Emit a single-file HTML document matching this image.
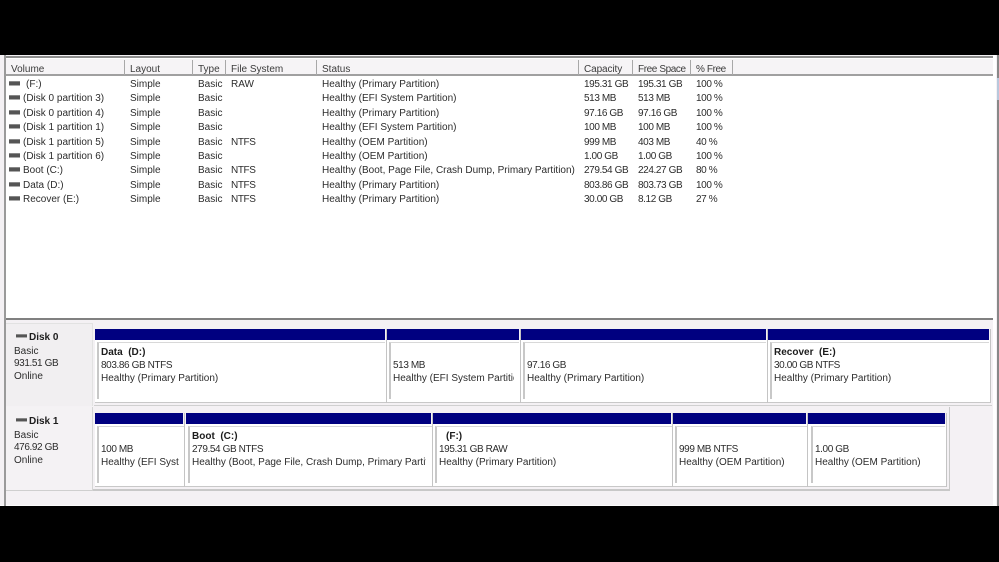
<!DOCTYPE html>
<html><head><meta charset="utf-8">
<style>
html,body{margin:0;padding:0;background:#000;width:999px;height:562px;overflow:hidden}
#s{position:absolute;left:0;top:0;width:999px;height:562px;background:#000;overflow:hidden;font:10px/14px "Liberation Sans",sans-serif;color:#2c2c2c;filter:blur(.3px)}
#s div{position:absolute}
.t{white-space:nowrap;transform:translateY(1px)}
.n{letter-spacing:-.4px}
.h{top:62px;color:#3c3c3c}
.sep{top:60px;width:1px;height:15px;background:#a8a8a8}
.ic{width:11px;height:3px;background:#555;border-top:1px solid #888;border-bottom:1px solid #aaa;box-sizing:content-box;left:9px}
.bar{background:#000080;height:11px}
.p{border-left:2px solid #c8c8c8;border-top:1px solid #d8d8d8;box-sizing:border-box;overflow:hidden;height:57px}
.p span{position:absolute;white-space:nowrap;transform:translateY(1px)}
.v{width:1px;background:#c4c4c4}
b{color:#1c1c1c}
</style></head><body><div id="s">
<div style="left:0;top:55px;width:999px;height:451px;background:#f4f1f4"></div>
<div style="left:0;top:505px;width:999px;height:1px;background:#fbfbfb"></div>
<div style="left:4px;top:55px;width:2px;height:451px;background:#9a9a9a"></div>
<div style="left:6px;top:58px;width:987px;height:260px;background:#fff"></div>
<div style="left:6px;top:56px;width:987px;height:2px;background:#8c8c8c"></div>
<div style="left:6px;top:59px;width:987px;height:16px;background:#f6f4f6"></div>
<div style="left:6px;top:74px;width:987px;height:2px;background:#a0a0a0"></div>
<div style="left:993px;top:55px;width:3px;height:451px;background:#fff"></div>
<div style="left:997px;top:55px;width:2px;height:451px;background:#888"></div>
<div style="left:997px;top:78px;width:2px;height:22px;background:#b8c8dc"></div>
<div style="left:6px;top:318px;width:987px;height:2px;background:#808080"></div>

<div class="sep" style="left:124px"></div><div class="sep" style="left:192px"></div><div class="sep" style="left:225px"></div><div class="sep" style="left:316px"></div><div class="sep" style="left:578px"></div><div class="sep" style="left:632px"></div><div class="sep" style="left:690px"></div><div class="sep" style="left:732px"></div>
<div class="t h" style="left:11px">Volume</div><div class="t h" style="left:130px">Layout</div><div class="t h" style="left:198px">Type</div><div class="t h" style="left:231px">File System</div><div class="t h" style="left:322px">Status</div><div class="t h" style="left:584px;letter-spacing:-.1px">Capacity</div><div class="t h n" style="left:638px">Free Space</div><div class="t h n" style="left:696px">% Free</div>

<div class="ic" style="top:81px"></div><div class="t" style="left:26px;top:77px">(F:)</div><div class="t" style="left:130px;top:77px">Simple</div><div class="t" style="left:198px;top:77px">Basic</div><div class="t" style="left:231px;top:77px">RAW</div><div class="t" style="left:322px;top:77px">Healthy (Primary Partition)</div><div class="t n" style="left:584px;top:77px">195.31 GB</div><div class="t n" style="left:638px;top:77px">195.31 GB</div><div class="t n" style="left:696px;top:77px">100 %</div>
<div class="ic" style="top:95px"></div><div class="t" style="left:23px;top:91px">(Disk 0 partition 3)</div><div class="t" style="left:130px;top:91px">Simple</div><div class="t" style="left:198px;top:91px">Basic</div><div class="t" style="left:322px;top:91px">Healthy (EFI System Partition)</div><div class="t n" style="left:584px;top:91px">513 MB</div><div class="t n" style="left:638px;top:91px">513 MB</div><div class="t n" style="left:696px;top:91px">100 %</div>
<div class="ic" style="top:110px"></div><div class="t" style="left:23px;top:106px">(Disk 0 partition 4)</div><div class="t" style="left:130px;top:106px">Simple</div><div class="t" style="left:198px;top:106px">Basic</div><div class="t" style="left:322px;top:106px">Healthy (Primary Partition)</div><div class="t n" style="left:584px;top:106px">97.16 GB</div><div class="t n" style="left:638px;top:106px">97.16 GB</div><div class="t n" style="left:696px;top:106px">100 %</div>
<div class="ic" style="top:124px"></div><div class="t" style="left:23px;top:120px">(Disk 1 partition 1)</div><div class="t" style="left:130px;top:120px">Simple</div><div class="t" style="left:198px;top:120px">Basic</div><div class="t" style="left:322px;top:120px">Healthy (EFI System Partition)</div><div class="t n" style="left:584px;top:120px">100 MB</div><div class="t n" style="left:638px;top:120px">100 MB</div><div class="t n" style="left:696px;top:120px">100 %</div>
<div class="ic" style="top:139px"></div><div class="t" style="left:23px;top:135px">(Disk 1 partition 5)</div><div class="t" style="left:130px;top:135px">Simple</div><div class="t" style="left:198px;top:135px">Basic</div><div class="t n" style="left:231px;top:135px">NTFS</div><div class="t" style="left:322px;top:135px">Healthy (OEM Partition)</div><div class="t n" style="left:584px;top:135px">999 MB</div><div class="t n" style="left:638px;top:135px">403 MB</div><div class="t n" style="left:696px;top:135px">40 %</div>
<div class="ic" style="top:153px"></div><div class="t" style="left:23px;top:149px">(Disk 1 partition 6)</div><div class="t" style="left:130px;top:149px">Simple</div><div class="t" style="left:198px;top:149px">Basic</div><div class="t" style="left:322px;top:149px">Healthy (OEM Partition)</div><div class="t n" style="left:584px;top:149px">1.00 GB</div><div class="t n" style="left:638px;top:149px">1.00 GB</div><div class="t n" style="left:696px;top:149px">100 %</div>
<div class="ic" style="top:167px"></div><div class="t" style="left:23px;top:163px">Boot (C:)</div><div class="t" style="left:130px;top:163px">Simple</div><div class="t" style="left:198px;top:163px">Basic</div><div class="t n" style="left:231px;top:163px">NTFS</div><div class="t" style="left:322px;top:163px">Healthy (Boot, Page File, Crash Dump, Primary Partition)</div><div class="t n" style="left:584px;top:163px">279.54 GB</div><div class="t n" style="left:638px;top:163px">224.27 GB</div><div class="t n" style="left:696px;top:163px">80 %</div>
<div class="ic" style="top:182px"></div><div class="t" style="left:23px;top:178px">Data (D:)</div><div class="t" style="left:130px;top:178px">Simple</div><div class="t" style="left:198px;top:178px">Basic</div><div class="t n" style="left:231px;top:178px">NTFS</div><div class="t" style="left:322px;top:178px">Healthy (Primary Partition)</div><div class="t n" style="left:584px;top:178px">803.86 GB</div><div class="t n" style="left:638px;top:178px">803.73 GB</div><div class="t n" style="left:696px;top:178px">100 %</div>
<div class="ic" style="top:196px"></div><div class="t" style="left:23px;top:192px">Recover (E:)</div><div class="t" style="left:130px;top:192px">Simple</div><div class="t" style="left:198px;top:192px">Basic</div><div class="t n" style="left:231px;top:192px">NTFS</div><div class="t" style="left:322px;top:192px">Healthy (Primary Partition)</div><div class="t n" style="left:584px;top:192px">30.00 GB</div><div class="t n" style="left:638px;top:192px">8.12 GB</div><div class="t n" style="left:696px;top:192px">27 %</div>

<div style="left:6px;top:323px;width:87px;height:83px;background:#f1eff1;border-top:1px solid #e2e2e2;border-right:1px solid #e2e2e2;box-sizing:border-box"></div>
<div style="left:6px;top:407px;width:87px;height:84px;background:#f4f2f4;border-right:1px solid #d4d4d4;border-bottom:1px solid #cfcfcf;box-sizing:border-box"></div>
<div style="left:94px;top:405px;width:898px;height:1px;background:#d0d0d0"></div>
<div style="left:93px;top:489px;width:857px;height:2px;background:#c8c8c8"></div>
<div style="left:949px;top:407px;width:1px;height:83px;background:#c8c8c8"></div>

<div style="left:95px;top:340px;width:895px;height:62px;background:#fff"></div>
<div style="left:95px;top:402px;width:896px;height:1px;background:#c8c8c8"></div>
<div style="left:95px;top:424px;width:851px;height:62px;background:#fff"></div>
<div style="left:95px;top:486px;width:852px;height:1px;background:#c8c8c8"></div>

<div class="v" style="left:386px;top:329px;height:74px"></div><div class="v" style="left:520px;top:329px;height:74px"></div><div class="v" style="left:767px;top:329px;height:74px"></div><div class="v" style="left:990px;top:329px;height:74px"></div>
<div class="v" style="left:184px;top:413px;height:74px"></div><div class="v" style="left:432px;top:413px;height:74px"></div><div class="v" style="left:672px;top:413px;height:74px"></div><div class="v" style="left:807px;top:413px;height:74px"></div><div class="v" style="left:946px;top:413px;height:74px"></div>

<div class="ic" style="left:16px;top:334px;height:2px"></div>
<div class="t" style="left:29px;top:330px"><b>Disk 0</b></div><div class="t" style="left:14px;top:344px">Basic</div><div class="t n" style="left:14px;top:356px">931.51 GB</div><div class="t" style="left:14px;top:369px">Online</div>
<div class="ic" style="left:16px;top:418px;height:2px"></div>
<div class="t" style="left:29px;top:414px"><b>Disk 1</b></div><div class="t" style="left:14px;top:428px">Basic</div><div class="t n" style="left:14px;top:440px">476.92 GB</div><div class="t" style="left:14px;top:453px">Online</div>

<div class="bar" style="left:95px;top:329px;width:290px"></div><div class="bar" style="left:387px;top:329px;width:132px"></div><div class="bar" style="left:521px;top:329px;width:245px"></div><div class="bar" style="left:768px;top:329px;width:221px"></div>
<div class="p" style="left:97px;top:342px;width:288px"><span style="left:2px;top:2px"><b>Data&nbsp; (D:)</b></span><span class="n" style="left:2px;top:15px">803.86 GB NTFS</span><span style="left:2px;top:28px">Healthy (Primary Partition)</span></div>
<div class="p" style="left:389px;top:342px;width:130px"><span class="n" style="left:2px;top:15px">513 MB</span><span style="left:2px;top:28px;width:121px;overflow:hidden;display:block">Healthy (EFI System Partition)</span></div>
<div class="p" style="left:523px;top:342px;width:243px"><span class="n" style="left:2px;top:15px">97.16 GB</span><span style="left:2px;top:28px">Healthy (Primary Partition)</span></div>
<div class="p" style="left:770px;top:342px;width:219px"><span style="left:2px;top:2px"><b>Recover&nbsp; (E:)</b></span><span class="n" style="left:2px;top:15px">30.00 GB NTFS</span><span style="left:2px;top:28px">Healthy (Primary Partition)</span></div>

<div class="bar" style="left:95px;top:413px;width:88px"></div><div class="bar" style="left:186px;top:413px;width:245px"></div><div class="bar" style="left:433px;top:413px;width:238px"></div><div class="bar" style="left:673px;top:413px;width:133px"></div><div class="bar" style="left:808px;top:413px;width:137px"></div>
<div class="p" style="left:97px;top:426px;width:87px"><span class="n" style="left:2px;top:15px">100 MB</span><span style="left:2px;top:28px;width:78px;overflow:hidden;display:block">Healthy (EFI System Partition)</span></div>
<div class="p" style="left:188px;top:426px;width:244px"><span style="left:2px;top:2px"><b>Boot&nbsp; (C:)</b></span><span class="n" style="left:2px;top:15px">279.54 GB NTFS</span><span style="left:2px;top:28px;width:234px;overflow:hidden;display:block">Healthy (Boot, Page File, Crash Dump, Primary Partition)</span></div>
<div class="p" style="left:435px;top:426px;width:237px"><span style="left:9px;top:2px"><b>(F:)</b></span><span class="n" style="left:2px;top:15px">195.31 GB RAW</span><span style="left:2px;top:28px">Healthy (Primary Partition)</span></div>
<div class="p" style="left:675px;top:426px;width:132px"><span class="n" style="left:2px;top:15px">999 MB NTFS</span><span style="left:2px;top:28px">Healthy (OEM Partition)</span></div>
<div class="p" style="left:811px;top:426px;width:134px"><span class="n" style="left:2px;top:15px">1.00 GB</span><span style="left:2px;top:28px">Healthy (OEM Partition)</span></div>
</div></body></html>
